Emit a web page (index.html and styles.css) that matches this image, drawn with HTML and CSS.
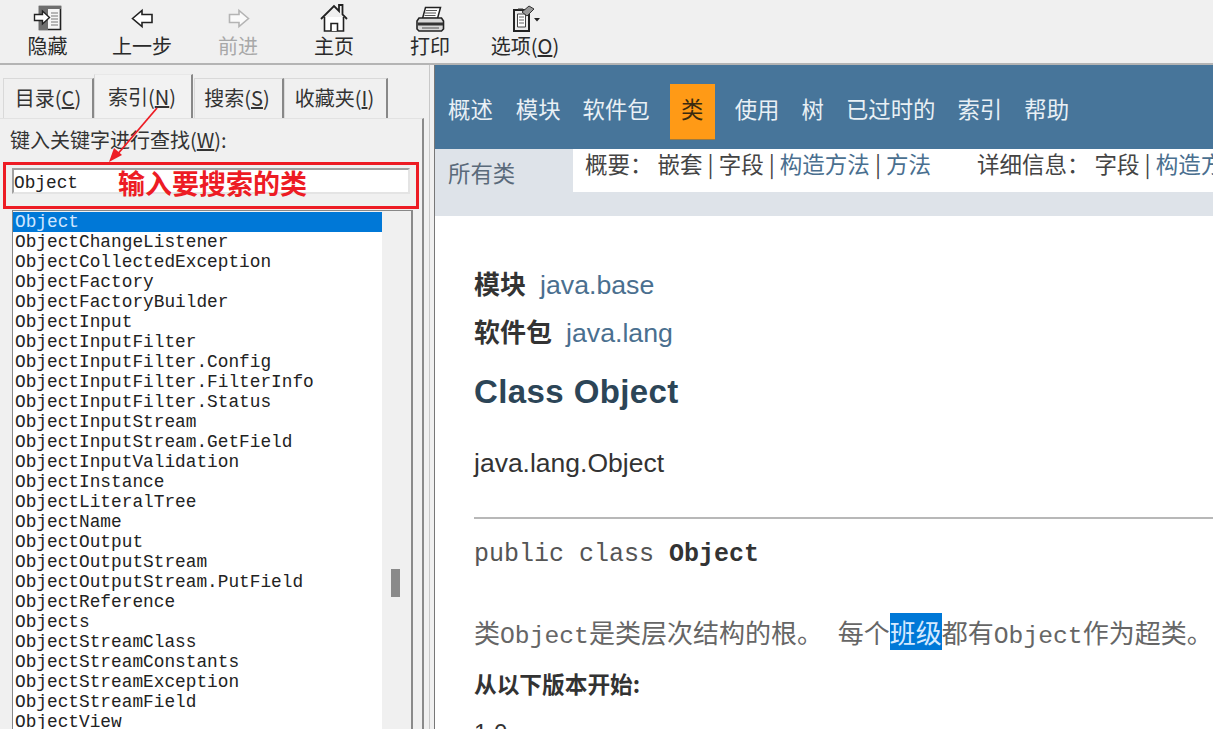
FILE: index.html
```html
<!DOCTYPE html>
<html lang="zh">
<head>
<meta charset="utf-8">
<title>Java API</title>
<link rel="stylesheet" href="styles.css">
</head>
<body>
<div class="app">
  <header class="toolbar">
    <div class="tool t-hide">
      <svg class="ic" width="32" height="30" viewBox="0 0 32 30"><path d="M7.5 2.5h21v23h-21z" fill="#f6f6f6" stroke="#222" stroke-width="1.6"/><path d="M7 2h22v3H7zM7 5h9v21H7z" fill="#6e6e6e"/><path d="M19 9h7M19 12h7M19 15h7M19 18h7M19 21h7" stroke="#777"/><path d="M2.5 10.5h8V7l7 6.500-7 6.500v-3.500h-8z" fill="#fff" stroke="#222" stroke-width="1.4"/></svg>
      <span>隐藏</span>
    </div>
    <div class="tool t-back">
      <svg class="ic" width="24" height="30" viewBox="0 0 24 30"><path d="M2.500 14.500L12 6.500v4h10v8H12v4z" fill="#fff" stroke="#222" stroke-width="1.600"/></svg>
      <span>上一步</span>
    </div>
    <div class="tool t-fwd off">
      <svg class="ic" width="24" height="30" viewBox="0 0 24 30"><path d="M22.500 14.500L13 6.500v4H3.500v8H13v4z" fill="#fafafa" stroke="#b4b4b4" stroke-width="1.600"/></svg>
      <span>前进</span>
    </div>
    <div class="tool t-home">
      <svg class="ic" width="30" height="30" viewBox="0 0 30 30"><path d="M2 15L15 2l5 5V1h3.500v9.500L28 15" fill="none" stroke="#222" stroke-width="1.800"/><path d="M5.500 13v14h19V13" fill="#fff" stroke="#222" stroke-width="1.600"/><path d="M12 27v-7.500h6.500V27" fill="#fff" stroke="#222" stroke-width="1.600"/></svg>
      <span>主页</span>
    </div>
    <div class="tool t-print">
      <svg class="ic" width="30" height="30" viewBox="0 0 30 30"><path d="M10.500 3.500h15l-3 11h-15z" fill="#fff" stroke="#222" stroke-width="1.500"/><path d="M11 6.500h11M10 9h11M9.500 11.500h11" stroke="#555"/><path d="M4 14h22.500l2 3v8l-2 2H4l-2-2v-8z" fill="#d8d8d8" stroke="#222" stroke-width="1.600"/><path d="M3 18.500h25v3H3z" fill="#333"/><path d="M7 24h17" stroke="#777" stroke-width="1.400"/></svg>
      <span>打印</span>
    </div>
    <div class="tool t-opt">
      <svg class="ic" width="30" height="30" viewBox="0 0 30 30"><path d="M4 6h15v21H4z" fill="#ededed" stroke="#222" stroke-width="2"/><path d="M8 6V4.500h5V6z" fill="#333"/><path d="M7.500 10h8v13h-8z" fill="#fff" stroke="#444"/><path d="M9 13h5M9 16h5M9 19h5" stroke="#666"/><path d="M12 8l7-6 5 3-7 7z" fill="#999" stroke="#333"/><path d="M24 14h6l-3 3.500z" fill="#222"/></svg>
      <span>选项(<u>O</u>)</span>
    </div>
  </header>

  <div class="main">
    <aside class="side">
      <nav class="tabs">
        <div class="tab t1">目录(<u>C</u>)</div>
        <div class="tab t2 active">索引(<u>N</u>)</div>
        <div class="tab t3">搜索(<u>S</u>)</div>
        <div class="tab t4">收藏夹(<u>I</u>)</div>
      </nav>
      <section class="panel">
        <label class="kw">键入关键字进行查找(<u>W</u>):</label>
        <div class="search">Object</div>
        <div class="listbox">
          <ul class="list">
            <li class="sel">Object</li>
            <li>ObjectChangeListener</li>
            <li>ObjectCollectedException</li>
            <li>ObjectFactory</li>
            <li>ObjectFactoryBuilder</li>
            <li>ObjectInput</li>
            <li>ObjectInputFilter</li>
            <li>ObjectInputFilter.Config</li>
            <li>ObjectInputFilter.FilterInfo</li>
            <li>ObjectInputFilter.Status</li>
            <li>ObjectInputStream</li>
            <li>ObjectInputStream.GetField</li>
            <li>ObjectInputValidation</li>
            <li>ObjectInstance</li>
            <li>ObjectLiteralTree</li>
            <li>ObjectName</li>
            <li>ObjectOutput</li>
            <li>ObjectOutputStream</li>
            <li>ObjectOutputStream.PutField</li>
            <li>ObjectReference</li>
            <li>Objects</li>
            <li>ObjectStreamClass</li>
            <li>ObjectStreamConstants</li>
            <li>ObjectStreamException</li>
            <li>ObjectStreamField</li>
            <li>ObjectView</li>
          </ul>
          <div class="scroll"><div class="thumb"></div></div>
        </div>
      </section>
    </aside>
    <div class="split"></div>
    <main class="doc">
      <nav class="topnav">
        <a>概述</a><a>模块</a><a>软件包</a><a class="cur">类</a><a>使用</a><a>树</a><a>已过时的</a><a>索引</a><a>帮助</a>
      </nav>
      <div class="subnav">
        <div class="allc">所有类</div>
        <div class="sumbox">
          <span class="g1">概要： 嵌套 | 字段 | <b class="lnk">构造方法</b> | <b class="lnk">方法</b></span>
          <span class="g2">详细信息： 字段 | <b class="lnk">构造方</b></span>
        </div>
      </div>
      <article class="body">
        <div class="pk"><strong>模块</strong><a>java.base</a></div>
        <div class="pk p2"><strong>软件包</strong><a>java.lang</a></div>
        <h1>Class Object</h1>
        <div class="inh">java.lang.Object</div>
        <hr>
        <div class="sig">public class <b>Object</b></div>
        <div class="desc">类<span class="m">Object</span>是类层次结构的根。<span class="m"> </span>每个<mark>班级</mark>都有<span class="m">Object</span>作为超类。</div>
        <div class="since">从以下版本开始:</div>
        <div class="ver">1.0</div>
      </article>
    </main>
  </div>

  <div class="callout">
    <div class="redbox"></div>
    <div class="redtext">输入要搜索的类</div>
    <svg class="arrow" width="60" height="60" viewBox="0 0 60 60"><path d="M49 2L8 50" stroke="#ed1c24" stroke-width="1.8" fill="none"/><path d="M1 56l5-14 8 7z" fill="#ed1c24"/></svg>
  </div>
</div>
</body>
</html>
```
FILE: styles.css
```css
* { box-sizing: border-box; }
html, body { margin: 0; height: 100%; overflow: hidden; }
body { font-family: "Noto Sans CJK SC", "Liberation Sans", sans-serif; background: #f0f0f0; color: #333; }
.app { position: relative; width: 1213px; height: 729px; overflow: hidden; display: flex; flex-direction: column; }

.toolbar { height: 65px; flex: none; display: flex; background: #f0f0f0; border-bottom: 2px solid #b4b4b4; }
.tool { display: flex; flex-direction: column; align-items: center; font-size: 20px; line-height: 24px; color: #2a2a2a; }
.tool .ic { display: block; height: 30px; margin-top: 4px; }
.tool.off { color: #a8a8a8; }
.t-hide { width: 95px; }
.t-back { width: 94px; }
.t-fwd { width: 98px; }
.t-home { width: 94px; }
.t-print { width: 98px; }
.t-opt { width: 92px; }

.main { flex: 1; display: flex; min-height: 0; }
.side { width: 424px; flex: none; display: flex; flex-direction: column; padding-top: 9px; }
.tabs { height: 44px; display: flex; align-items: flex-end; padding-left: 3px; flex: none; }
.tab { height: 40px; font-size: 20px; line-height: 38px; text-align: center; border: 1px solid #d9d9d9; border-right: 2px solid #888; border-bottom: 0; background: #f0f0f0; color: #333; white-space: nowrap; }
.t1 { width: 91px; }
.t2 { width: 99px; height: 44px; line-height: 44px; background: #f2f2f2; border-top-color: #e8e8e8; padding-right: 2px; }
.t3 { width: 90px; margin-left: 1px; padding-right: 3px; }
.t4 { width: 104px; padding-right: 2px; }
.panel { flex: 1; min-height: 0; padding: 0 0 0 12px; border-top: 1px solid #e2e2e2; border-right: 2px solid #8a8a8a; position: relative; }
.kw { display: block; font-size: 20px; line-height: 24px; padding: 9px 0 0; margin-left: -2px; color: #333; height: 44px; white-space: nowrap; }
.search { height: 26px; width: 398px; margin-top: 5px; background: #fff; border: 2px solid #a0a0a0; border-right-color: #e4e4e4; border-bottom-color: #e4e4e4; font: 17.8px/24px "Liberation Mono", monospace; color: #222; padding-top: 1px; }
.listbox { height: 520px; width: 401px; display: flex; border: 1px solid #888; border-right: 2px solid #8a8a8a; border-bottom: 0; margin-top: 16px; padding-top: 1px; }
.list { list-style: none; margin: 0; padding: 0; width: 369px; flex: none; background: #fff; overflow: hidden; }
.list li { height: 20px; font: 17.8px/20px "Liberation Mono", monospace; color: #222; padding-left: 2px; white-space: nowrap; }
.list li.sel { background: #0078d7; color: #cfe6ff; }
.scroll { flex: 1; background: #f0f0f0; position: relative; }
.thumb { position: absolute; left: 9px; top: 357px; width: 9px; height: 28px; background: #8a8a8a; }

.split { width: 10px; flex: none; background: linear-gradient(90deg, #f0f0f0 5px, #c8c8c8 5px, #c8c8c8 6px, #f0f0f0 6px); }
.doc { flex: 1; min-width: 0; display: flex; flex-direction: column; background: #fff; border-left: 1px solid #777; }

.topnav { height: 84px; flex: none; background: #47759a; display: flex; align-items: flex-start; padding: 19px 0 0 13px; font-size: 22.4px; color: #e9f0f5; }
.topnav a { line-height: 48px; height: 55px; margin-right: 22px; white-space: nowrap; }
.topnav a:first-child { margin-right: 23px; }
.topnav a.cur { background: #ff9a16; color: #3a2a10; width: 45px; margin-left: -2px; margin-right: 20px; text-align: center; box-shadow: 0 1px 0 #9c7a40; }
.subnav { height: 67px; flex: none; background: #dee3e9; display: flex; align-items: flex-start; }
.allc { width: 138px; flex: none; font-size: 22.4px; line-height: 46px; padding-left: 13px; color: #5a6a7a; }
.sumbox { flex: 1; height: 43px; background: #fff; white-space: nowrap; overflow: hidden; font-size: 22.5px; line-height: 28px; padding-left: 12px; color: #444; display: flex; }
.lnk { font-weight: 400; color: #4a6f8f; }
.g1 { width: 392px; flex: none; }
.g2 { flex: none; }

.body { flex: 1; min-height: 0; overflow: hidden; padding: 49px 0 0 39px; color: #3a3a3a; }
.pk { display: flex; align-items: baseline; height: 48px; line-height: 36px; font-size: 26px; }
.pk strong { font-weight: 700; color: #333; margin-right: 14px; }
.pk a { font-family: "Liberation Sans", sans-serif; font-size: 26.7px; color: #4a6f8f; }
.body h1 { margin: 0; font: 700 33px/44px "Liberation Sans", sans-serif; letter-spacing: .4px; color: #2c4557; padding-top: 9px; height: 63px; }
.inh { font: 26.5px/36px "Liberation Sans", sans-serif; color: #333; margin-top: 21px; }
.body hr { border: 0; height: 2px; background: #b8b8b8; margin: 36px 0 0; }
.sig { font: 25px/32px "Liberation Mono", monospace; color: #555; margin-top: 20px; }
.sig b { color: #333; }
.desc { font: 26px/40px "Noto Sans CJK SC", monospace; color: #666; margin-top: 41px; white-space: nowrap; }
.desc .m { font-family: "Liberation Mono", monospace; font-size: 24.7px; }
.desc mark { background: #0078d7; color: #d6eaff; }
.since { font-size: 22.7px; font-weight: 700; line-height: 32px; color: #333; margin-top: 12px; }
.ver { font: 24px/32px "Liberation Sans", sans-serif; margin-top: 17px; color: #333; }

.callout { position: absolute; left: 0; top: 0; width: 0; height: 0; }
.redbox { position: absolute; left: 3px; top: 162px; width: 416px; height: 47px; border: 3px solid #ed1c24; }
.redtext { position: absolute; left: 118px; top: 165px; font-size: 27px; font-weight: 700; line-height: 36px; color: #ed1c24; white-space: nowrap; }
.arrow { position: absolute; left: 108px; top: 106px; }
```
